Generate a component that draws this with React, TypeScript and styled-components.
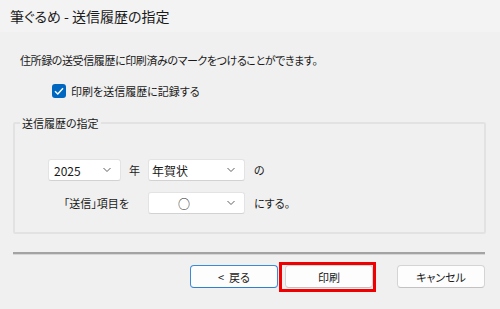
import React from "react";
import styled, { createGlobalStyle } from "styled-components";

const GlobalStyle = createGlobalStyle`
  html, body {
    margin: 0;
    padding: 0;
    background: #f0f0f0;
  }
  body {
    font-family: "Noto Sans CJK JP", "Noto Sans", sans-serif;
    font-feature-settings: "palt";
    color: #1a1a1a;
  }
`;

const Chevron: React.FC = () => (
  <svg width="10" height="6" viewBox="0 0 10 6">
    <path d="M1.5 1 L5 4.5 L8.5 1" fill="none" stroke="#606060" strokeWidth="1" />
  </svg>
);

const Check: React.FC = () => (
  <svg width="10" height="8" viewBox="0 0 10 8">
    <path d="M1 4.2 L3.8 7 L9 1.2" fill="none" stroke="#ffffff" strokeWidth="1.4" />
  </svg>
);

type SelectProps = { width: number; indent?: number; value: string };

const Select: React.FC<SelectProps> = ({ width, indent = 4, value }) => (
  <SelectBox width={width} indent={indent}>
    <span>{value}</span>
    <Chevron />
  </SelectBox>
);

export default function App() {
  return (
    <Window>
      <GlobalStyle />
      <TitleBar>筆ぐるめ - 送信履歴の指定</TitleBar>
      <Body>
        <Description>住所録の送受信履歴に印刷済みのマークをつけることができます。</Description>
        <CheckRow>
          <CheckBox>
            <Check />
          </CheckBox>
          <span>印刷を送信履歴に記録する</span>
        </CheckRow>
        <Group>
          <Legend>送信履歴の指定</Legend>
          <FormGrid>
            <YearCell>
              <Select width={73} indent={5} value="2025" />
              <span>年</span>
            </YearCell>
            <Select width={97} indent={3} value="年賀状" />
            <span>の</span>
            <LabelCell>「送信」項目を</LabelCell>
            <Select width={97} indent={29} value="○" />
            <span>にする。</span>
          </FormGrid>
        </Group>
        <Separator />
        <ButtonRow>
          <Button primary>&lt;&nbsp;&nbsp;戻る</Button>
          <Highlight>
            <Button>印刷</Button>
          </Highlight>
          <CancelButton>キャンセル</CancelButton>
        </ButtonRow>
      </Body>
    </Window>
  );
}

const Window = styled.div`
  width: 500px;
  height: 309px;
  background: #f0f0f0;
  overflow: hidden;
  font-size: 11px;
`;

const TitleBar = styled.div`
  height: 32px;
  box-sizing: border-box;
  padding: 0 0 0 10px;
  display: flex;
  align-items: center;
  background: #f3f3f3;
  font-size: 14px;
  color: #1b1b1b;
`;

const Body = styled.div`
  padding: 0 14px 0 13px;
`;

const Description = styled.div`
  margin-top: 20px;
  padding-left: 7px;
  line-height: 16px;
  letter-spacing: -0.4px;
`;

const CheckRow = styled.div`
  margin-top: 15px;
  padding-left: 39px;
  height: 16px;
  display: flex;
  align-items: center;
  gap: 5px;
  line-height: 16px;
`;

const CheckBox = styled.span`
  width: 14px;
  height: 14px;
  border-radius: 3px;
  background: #0067c0;
  display: inline-flex;
  align-items: center;
  justify-content: center;
`;

const Group = styled.fieldset`
  margin: 16px 0 0 0;
  padding: 28px 0 18px 0;
  border: 2px solid #e2e2e2;
  border-radius: 2px;
  min-width: 0;
`;

const Legend = styled.legend`
  margin-left: 5px;
  padding: 0 2px;
  line-height: 16px;
`;

const FormGrid = styled.div`
  display: grid;
  grid-template-columns: 91px 97px auto;
  column-gap: 9px;
  row-gap: 11px;
  align-items: center;
  justify-items: start;
  padding-left: 33px;
`;

const YearCell = styled.div`
  display: flex;
  align-items: center;
  gap: 8px;
`;

const LabelCell = styled.span`
  justify-self: end;
  padding-right: 10px;
`;

const SelectBox = styled.div<{ width: number; indent: number }>`
  width: ${({ width }) => width}px;
  height: 22px;
  box-sizing: border-box;
  padding: 0 8px 0 ${({ indent }) => indent}px;
  background: #ffffff;
  border: 1px solid #e3e3e3;
  border-bottom-color: #d2d2d2;
  border-radius: 3px;
  display: flex;
  align-items: center;
  justify-content: space-between;
  font-size: 12px;
`;

const Separator = styled.div`
  margin-top: 18px;
  margin-right: 1px;
  height: 0;
  border-top: 2px solid #a3a3a3;
  border-bottom: 1px solid #d6d6d6;
`;

const ButtonRow = styled.div`
  margin-top: 10px;
  margin-right: 1px;
  display: flex;
  justify-content: flex-end;
  align-items: center;
  gap: 7px;
`;

const Button = styled.button<{ primary?: boolean }>`
  width: 88px;
  height: 23px;
  box-sizing: border-box;
  padding: 0;
  background: #fdfdfd;
  border: 1px solid ${({ primary }) => (primary ? "#3b8ad8" : "#d4d4d4")};
  border-bottom-color: ${({ primary }) => (primary ? "#2f7fcf" : "#c2c2c2")};
  border-radius: 4px;
  font-family: inherit;
  font-feature-settings: "palt";
  font-size: 11px;
  color: #1a1a1a;
`;

const CancelButton = styled(Button)`
  margin-left: 17px;
`;

const Highlight = styled.span`
  position: relative;
  display: inline-flex;

  &::after {
    content: "";
    position: absolute;
    inset: -3px -3px -4px -6px;
    border: 3px solid #f00000;
    pointer-events: none;
  }
`;
